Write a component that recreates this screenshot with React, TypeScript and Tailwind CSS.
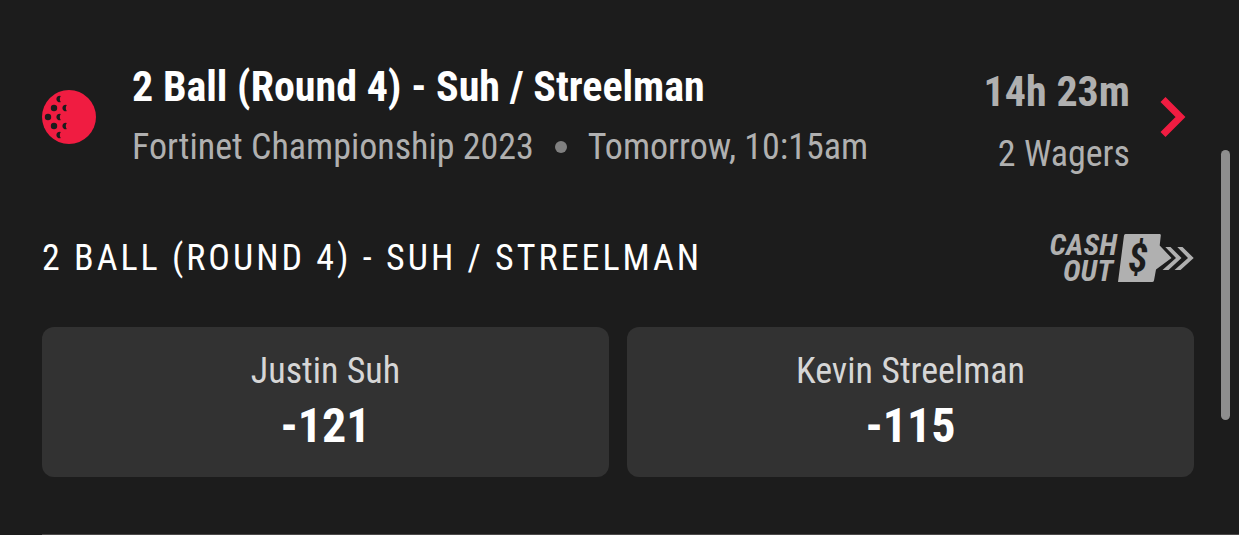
import { clsx } from 'clsx';

interface Selection {
  name: string;
  odds: string;
}

const selections: Selection[] = [
  { name: 'Justin Suh', odds: '-121' },
  { name: 'Kevin Streelman', odds: '-115' },
];

function GolfBallIcon({ className }: { className?: string }) {
  return (
    <svg viewBox="0 0 54 54" className={className} aria-hidden="true">
      <circle cx="27" cy="27" r="27" fill="#f01c41" />
      <g fill="#1c1c1c">
        <circle cx="6" cy="27" r="3.2" />
        <circle cx="12" cy="18" r="3.2" />
        <circle cx="12" cy="36" r="3.2" />
        <path d="M18.800 5.900A3.300 3.300 0 1 0 18.800 12.100q-2-3.100 0-6.200z" />
        <path d="M24.800 14.900A3.300 3.300 0 1 0 24.800 21.100q-2-3.100 0-6.200z" />
        <path d="M18.800 23.900A3.300 3.300 0 1 0 18.800 30.100q-2-3.100 0-6.200z" />
        <path d="M24.800 32.900A3.300 3.300 0 1 0 24.800 39.100q-2-3.100 0-6.200z" />
        <path d="M18.800 41.900A3.300 3.300 0 1 0 18.800 48.100q-2-3.100 0-6.200z" />
      </g>
    </svg>
  );
}

function ChevronIcon({ className }: { className?: string }) {
  return (
    <svg viewBox="0 0 26 40" className={className} fill="none" aria-hidden="true">
      <path d="M3 2.500L20.500 20L3 37.500" stroke="#f01c41" strokeWidth="7" />
    </svg>
  );
}

function CashOutBadge() {
  return (
    <div className="flex shrink-0 items-center gap-px text-[#b0b0b0]">
      <p className="flex flex-col items-end text-[30px] leading-[26px] font-bold uppercase italic">
        <span>Cash</span>
        <span className="pr-1">Out</span>
      </p>
      <svg viewBox="0 0 76 48" className="h-12 w-[76px]" aria-hidden="true">
        <path
          d="M7.500 0H41.500Q43 0 42.800 1.500L41.700 11.500L53.500 24L38 35.500L36 46.500Q35.700 48 34 48H0L6 1.500Q6.200 0 7.500 0z"
          fill="currentColor"
        />
        <text x="10" y="38" fontSize="40" className="fill-[#1c1c1c] font-bold italic">
          $
        </text>
        <path
          d="M47.300 13h5.200L63.500 24L50.500 36h-6L58 24zM59.300 13h5.200L75.700 24L62.500 36h-6L70 24z"
          fill="currentColor"
        />
      </svg>
    </div>
  );
}

function OddsButton({ name, odds }: Selection) {
  return (
    <button
      type="button"
      className="flex flex-col items-center rounded-xl bg-[#323232] px-6 pt-5 pb-5"
    >
      <span className="text-4xl leading-12 text-[#d6d6d6]">{name}</span>
      <span className="text-5xl leading-[62px] font-bold text-white">{odds}</span>
    </button>
  );
}

export default function App() {
  return (
    <main
      className={clsx(
        'relative bg-[#1c1c1c] text-white',
        "font-['Roboto_Condensed','Liberation_Sans_Narrow',Roboto,sans-serif]",
      )}
    >
      <div className="pt-[49px] pr-[45px] pb-[57px] pl-[42px]">
        <a href="#event" className="flex items-center">
          <GolfBallIcon className="mr-9 size-[54px] shrink-0" />
          <div className="min-w-0 flex-1">
            <h1 className="text-[42px] leading-[60px] font-bold whitespace-nowrap">
              2 Ball (Round 4) - Suh / Streelman
            </h1>
            <p className="flex items-center gap-[21px] text-4xl leading-[60px] whitespace-nowrap text-[#b0b0b0]">
              Fortinet Championship 2023
              <span className="size-3 rounded-full bg-[#808080]" />
              Tomorrow, 10:15am
            </p>
          </div>
          <div className="shrink-0 pt-3 text-right text-[#b0b0b0]">
            <p className="text-[42px] leading-[62px] font-bold">14h 23m</p>
            <p className="text-4xl leading-[62px]">2 Wagers</p>
          </div>
          <ChevronIcon className="mr-2 ml-[30px] h-10 w-[26px] shrink-0" />
        </a>

        <div className="mt-[47px] flex items-center justify-between">
          <h2 className="text-4xl leading-12 tracking-[3px] whitespace-nowrap uppercase">
            2 Ball (Round 4) - Suh / Streelman
          </h2>
          <CashOutBadge />
        </div>

        <div className="mt-[43px] grid grid-cols-2 gap-[18px]">
          {selections.map((selection) => (
            <OddsButton key={selection.name} {...selection} />
          ))}
        </div>
      </div>
      <hr className="ml-[42px] border-[#4a4848]" />

      <div className="absolute top-[150px] right-[9px] h-[270px] w-[9px] rounded-full bg-[#8e8e8e]" />
    </main>
  );
}
